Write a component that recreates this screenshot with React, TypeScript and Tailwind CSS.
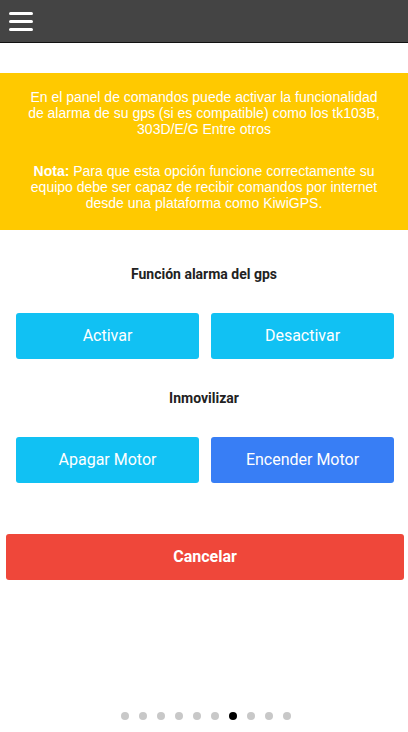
import React from 'react';

const dots = [0, 1, 2, 3, 4, 5, 6, 7, 8, 9];

const App: React.FC = () => {
  return (
    <div className="flex flex-col min-h-[732px] bg-white font-['Roboto',sans-serif]">
      <header className="flex items-center h-[43px] bg-[#444444] border-b border-[#111] px-[9px]">
        <div className="flex flex-col gap-[5px] w-[24px]">
          <span className="block h-[3px] rounded-full bg-white" />
          <span className="block h-[3px] rounded-full bg-white" />
          <span className="block h-[3px] rounded-full bg-white" />
        </div>
      </header>

      <section className="mt-[30px] bg-[#ffc900] pt-[16px] pb-[19px] px-4 text-center text-white text-[14px] leading-[16px] font-['Liberation_Sans',Arial,sans-serif]">
        <p>
          En el panel de comandos puede activar la funcionalidad
          <br />
          de alarma de su gps (si es compatible) como los tk103B,
          <br />
          303D/E/G Entre otros
        </p>
        <p className="mt-[26px]">
          <b>Nota:</b> Para que esta opción funcione correctamente su
          <br />
          equipo debe ser capaz de recibir comandos por internet
          <br />
          desde una plataforma como KiwiGPS.
        </p>
      </section>

      <h3 className="mt-[35px] text-center text-[14px] leading-[18px] font-bold text-[#222]">
        Función alarma del gps
      </h3>
      <div className="mt-[30px] grid grid-cols-2 gap-[12px] pl-[16px] pr-[14px]">
        <button className="h-[46px] rounded-[3px] bg-[#11c1f3] text-white text-[16px]">Activar</button>
        <button className="h-[46px] rounded-[3px] bg-[#11c1f3] text-white text-[16px]">Desactivar</button>
      </div>

      <h3 className="mt-[30px] text-center text-[14px] leading-[18px] font-bold text-[#222]">
        Inmovilizar
      </h3>
      <div className="mt-[30px] grid grid-cols-2 gap-[12px] pl-[16px] pr-[14px]">
        <button className="h-[46px] rounded-[3px] bg-[#11c1f3] text-white text-[16px]">Apagar Motor</button>
        <button className="h-[46px] rounded-[3px] bg-[#387ef5] text-white text-[16px]">Encender Motor</button>
      </div>

      <div className="mt-[51px] pl-[6px] pr-[4px]">
        <button className="w-full h-[46px] rounded-[3px] bg-[#ef473a] text-white text-[16px] font-bold">
          Cancelar
        </button>
      </div>

      <div className="flex-1" />
      <div className="flex justify-center gap-[10px] pl-[3px] pb-[12px]">
        {dots.map((d) => (
          <span
            key={d}
            className={d === 6 ? 'block w-[8px] h-[8px] rounded-full bg-black' : 'block w-[8px] h-[8px] rounded-full bg-[#c8c8c8]'}
          />
        ))}
      </div>
    </div>
  );
};

export default App;
